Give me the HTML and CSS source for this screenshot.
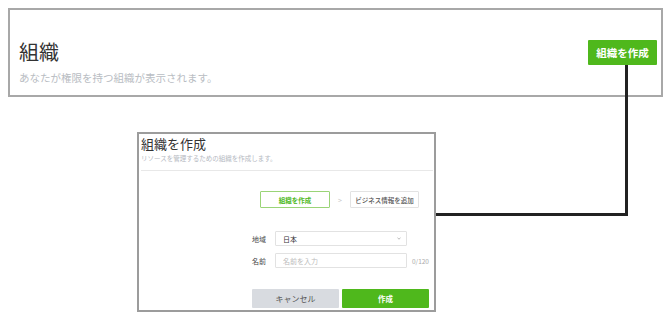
FILE: index.html
```html
<!DOCTYPE html>
<html lang="ja">
<head>
  <meta charset="UTF-8" />
  <meta name="viewport" content="width=device-width, initial-scale=1.0"/>
  <title>組織を作成</title>
  <link rel="stylesheet" href="styles.css">
</head>
<body>
  <div class="page">
    <section class="org-panel">
      <div>
        <h1 class="org-title">組織</h1>
        <p class="org-desc">あなたが権限を持つ組織が表示されます。</p>
      </div>
      <button class="btn-create-org">組織を作成</button>
    </section>

    <div class="connector"></div>

    <section class="modal">
      <h2 class="modal-title">組織を作成</h2>
      <p class="modal-desc">リソースを管理するための組織を作成します。</p>
      <div class="divider"></div>

      <div class="steps">
        <div class="step active">組織を作成</div>
        <span class="step-arrow">&gt;</span>
        <div class="step">ビジネス情報を追加</div>
      </div>

      <div class="form">
        <div class="form-row">
          <label class="form-label">地域</label>
          <div class="select">
            <span>日本</span>
            <svg width="4" height="3" viewBox="0 0 4 3"><path d="M0.5 0.8 L2 2.2 L3.5 0.8" fill="none" stroke="#999" stroke-width="0.7"/></svg>
          </div>
        </div>
        <div class="form-row">
          <label class="form-label">名前</label>
          <input class="text-input" type="text" placeholder="名前を入力" />
          <span class="counter">0/120</span>
        </div>
      </div>

      <div class="actions">
        <button class="btn-cancel">キャンセル</button>
        <button class="btn-submit">作成</button>
      </div>
    </section>
  </div>
</body>
</html>
```

FILE: styles.css
```css
* {
  box-sizing: border-box;
}
body {
  margin: 0;
  font-family: "Noto Sans CJK JP", "Noto Sans", sans-serif;
  background: #fff;
  color: #333;
  overflow: hidden;
}
.page {
  position: relative;
  padding: 8px 7px 0 8px;
  height: 323px;
}
.org-panel {
  height: 89px;
  border: 2px solid #a8a8a8;
  display: flex;
  justify-content: space-between;
  align-items: flex-start;
  padding: 30px 4px 0 9px;
}
.org-title {
  margin: 0;
  font-size: 20px;
  line-height: 24px;
  font-weight: normal;
  color: #333;
}
.org-desc {
  margin: 7px 0 0;
  font-size: 10.5px;
  line-height: 14px;
  color: #b9bdc3;
}
.btn-create-org {
  width: 69px;
  height: 25px;
  border: none;
  border-radius: 1px;
  background: #4fb81c;
  color: #fff;
  font-family: inherit;
  font-size: 10.5px;
  font-weight: bold;
  padding: 0;
}
.connector {
  position: absolute;
  left: 434px;
  top: 65px;
  width: 194px;
  height: 151px;
  border-right: 3px solid #222;
  border-bottom: 3px solid #222;
}
.modal {
  position: relative;
  margin: 35px 0 0 129px;
  width: 299px;
  height: 180px;
  border: 2px solid #9c9c9c;
  background: #fff;
  padding: 2px 1px 0 2px;
}
.modal-title {
  margin: 0;
  font-size: 13px;
  line-height: 16px;
  font-weight: normal;
  color: #333;
}
.modal-desc {
  margin: 2px 0 0;
  font-size: 6.5px;
  line-height: 9px;
  color: #b5b9bf;
}
.divider {
  margin-top: 7px;
  border-top: 1px solid #e8e8e8;
}
.steps {
  display: flex;
  align-items: center;
  margin-top: 20px;
  padding-left: 119px;
}
.step {
  height: 17px;
  display: flex;
  align-items: center;
  justify-content: center;
  border: 1px solid #e3e3e3;
  border-radius: 1px;
  font-size: 6.5px;
  font-weight: 500;
  color: #555;
  width: 69px;
  white-space: nowrap;
}
.step.active {
  width: 70px;
  border-color: #9ad477;
  color: #4fb81c;
  font-weight: bold;
}
.step-arrow {
  width: 20px;
  text-align: center;
  font-size: 7px;
  color: #c8c8c8;
}
.form {
  margin-top: 23px;
  padding-left: 111px;
  display: flex;
  flex-direction: column;
  gap: 7px;
}
.form-row {
  display: flex;
  align-items: center;
}
.form-label {
  width: 23px;
  font-size: 7px;
  color: #444;
}
.select, .text-input {
  width: 132px;
  height: 15px;
  border: 1px solid #e2e2e2;
  border-radius: 1px;
  padding: 0 5px 0 7px;
  font-family: inherit;
  font-size: 7px;
  color: #333;
  background: #fff;
}
.select {
  display: flex;
  align-items: center;
  justify-content: space-between;
}
.text-input {
  outline: none;
}
.text-input::placeholder {
  color: #bbb;
}
.counter {
  margin-left: 5px;
  font-size: 6.5px;
  color: #aaa;
}
.actions {
  display: flex;
  gap: 3px;
  margin-top: 21px;
  padding-left: 111px;
}
.actions button {
  width: 87px;
  height: 19px;
  border: none;
  border-radius: 1px;
  font-family: inherit;
  padding: 0;
}
.btn-cancel {
  background: #d8dbe0;
  color: #555;
  font-size: 8px;
}
.btn-submit {
  background: #4fb81c;
  color: #fff;
  font-size: 7.5px;
  font-weight: bold;
}
```
